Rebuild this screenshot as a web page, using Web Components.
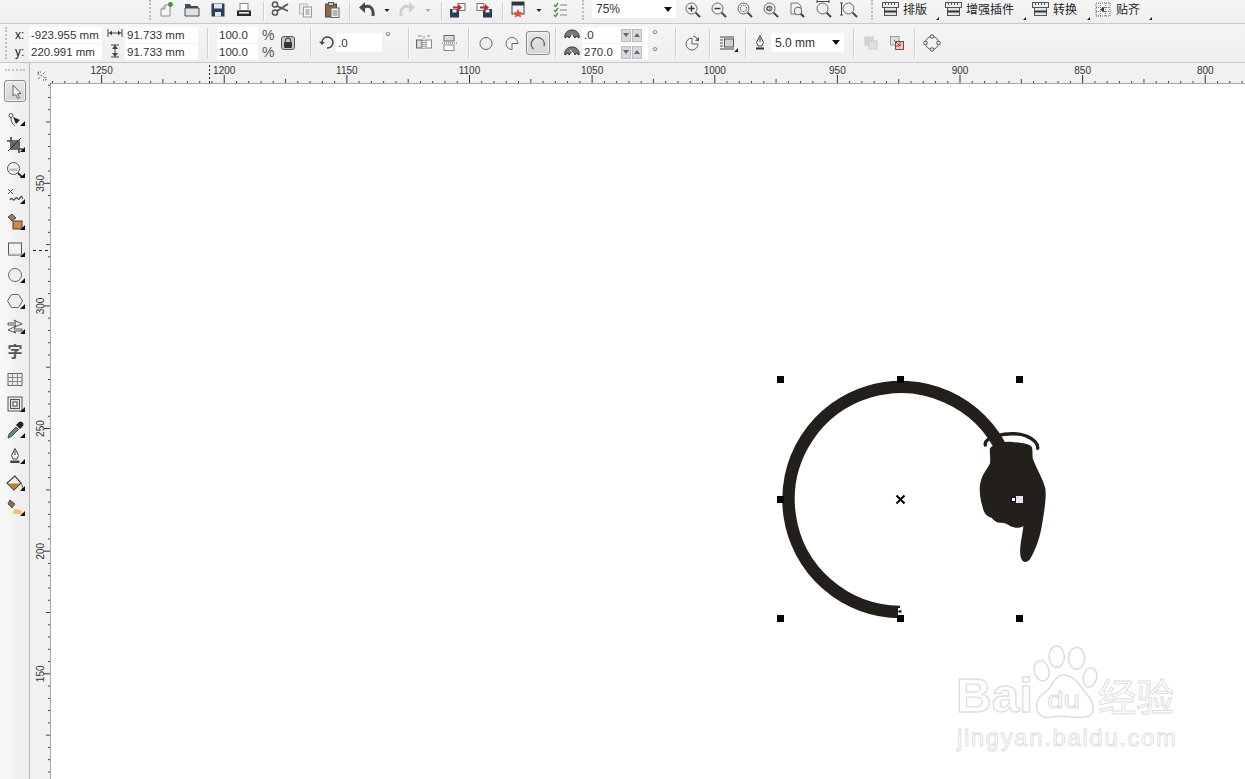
<!DOCTYPE html>
<html><head><meta charset="utf-8"><style>
html,body{margin:0;height:100%;overflow:hidden;background:#fff}
body{font:11px "Liberation Sans","Noto Sans CJK SC",sans-serif;color:#222}
x-sep[tall]{height:30px;margin-top:4px}
</style></head><body>
<x-app>
<x-bar slot="top" style="height:23px">
 <x-grip at="149"></x-grip>
 <x-icon at="156" n="new"></x-icon><x-icon at="182" n="open"></x-icon><x-icon at="208" n="save"></x-icon><x-icon at="234" n="print"></x-icon>
 <x-sep at="263"></x-sep>
 <x-icon at="270" n="cut"></x-icon><x-icon at="296" n="copy"></x-icon><x-icon at="322" n="paste"></x-icon>
 <x-sep at="349"></x-sep>
 <x-icon at="357" n="undo"></x-icon><x-icon at="377" n="drop"></x-icon><x-icon at="397" n="redo"></x-icon><x-icon at="418" n="dropl"></x-icon>
 <x-sep at="441"></x-sep>
 <x-icon at="448" n="imp"></x-icon><x-icon at="474" n="exp"></x-icon>
 <x-sep at="502"></x-sep>
 <x-icon at="508" n="launch"></x-icon><x-icon at="529" n="drop"></x-icon><x-icon at="550" n="opts"></x-icon>
 <x-grip at="582"></x-grip>
 <x-combo at="592" w="84" style="height:18px">75%</x-combo>
 <x-icon at="683" n="zin"></x-icon><x-icon at="709" n="zout"></x-icon><x-icon at="735" n="zsel"></x-icon><x-icon at="761" n="zfit"></x-icon><x-icon at="787" n="zpage"></x-icon><x-icon at="814" n="zwid"></x-icon><x-icon at="840" n="zhei"></x-icon>
 <x-grip at="871"></x-grip>
 <x-icon at="880" n="win"></x-icon><x-text at="903" w="24" style="margin-top:2px">排版</x-text><x-icon at="927" n="tri"></x-icon>
 <x-icon at="943" n="win"></x-icon><x-text at="966" w="48" style="margin-top:2px">增强插件</x-text><x-icon at="1014" n="tri"></x-icon>
 <x-icon at="1030" n="win"></x-icon><x-text at="1053" w="24" style="margin-top:2px">转换</x-text><x-icon at="1078" n="tri"></x-icon>
 <x-icon at="1093" n="snap"></x-icon><x-text at="1116" w="24" style="margin-top:2px">贴齐</x-text><x-icon at="1140" n="tri"></x-icon>
</x-bar>
<x-bar slot="prop" style="height:38px">
 <x-grip at="5" style="height:32px;margin-top:3px"></x-grip>
 <x-stack at="15" w="13"><x-text>x:</x-text><x-text>y:</x-text></x-stack>
 <x-stack at="29" w="73"><x-field>-923.955 mm</x-field><x-field>220.991 mm</x-field></x-stack>
 <x-stack at="105" w="20"><x-icon n="hsize" style="height:16px"></x-icon><x-icon n="vsize" style="height:16px"></x-icon></x-stack>
 <x-stack at="125" w="73"><x-field>91.733 mm</x-field><x-field>91.733 mm</x-field></x-stack>
 <x-sep at="207" tall></x-sep>
 <x-stack at="217" w="41"><x-field>100.0</x-field><x-field>100.0</x-field></x-stack>
 <x-stack at="262" w="12"><x-text big>%</x-text><x-text big>%</x-text></x-stack>
 <x-icon at="278" n="lock" mid></x-icon>
 <x-sep at="310" tall></x-sep>
 <x-icon at="317" n="rot" mid></x-icon>
 <x-field at="336" w="46" style="height:19px;margin-top:9px">.0</x-field>
 <x-text at="385" w="8" style="margin-top:5px;color:#777;font-size:15px">°</x-text>
 <x-sep at="408" tall></x-sep>
 <x-icon at="414" n="mirh" mid></x-icon><x-icon at="440" n="mirv" mid></x-icon>
 <x-sep at="468" tall></x-sep>
 <x-icon at="476" n="ell" mid></x-icon><x-icon at="502" n="pie" mid></x-icon>
 <x-icon at="526" w="24" n="arc" mid active></x-icon>
 <x-sep at="555" tall></x-sep>
 <x-stack at="562" w="20"><x-icon n="ang1" style="height:16px"></x-icon><x-icon n="ang2" style="height:16px"></x-icon></x-stack>
 <x-stack at="582" w="66"><x-field spin>.0</x-field><x-field spin>270.0</x-field></x-stack>
 <x-stack at="652" w="8"><x-text style="color:#777;font-size:15px">°</x-text><x-text style="color:#777;font-size:15px">°</x-text></x-stack>
 <x-sep at="675" tall></x-sep>
 <x-icon at="682" n="dir" mid></x-icon>
 <x-sep at="709" tall></x-sep>
 <x-icon at="718" n="wrap" mid></x-icon>
 <x-sep at="745" tall></x-sep>
 <x-icon at="750" n="pen" mid></x-icon>
 <x-combo at="771" w="73" style="height:19px;margin-top:9px">5.0 mm</x-combo>
 <x-sep at="853" tall></x-sep>
 <x-icon at="861" n="back" mid></x-icon><x-icon at="887" n="front" mid></x-icon>
 <x-sep at="914" tall></x-sep>
 <x-icon at="922" n="node" mid></x-icon>
</x-bar>
<x-palette slot="tools">
 <x-grip at="6" horizontal></x-grip>
 <x-icon at="18" w="22" h="22" n="pick" active style="margin-left:-1px"></x-icon>
 <x-icon at="46" n="shape" tri2></x-icon><x-icon at="72" n="crop" tri2></x-icon><x-icon at="98" n="zoom" tri2></x-icon>
 <x-icon at="124" n="free" tri2></x-icon><x-icon at="150" n="smart" tri2></x-icon><x-icon at="177" n="rect" tri2></x-icon>
 <x-icon at="203" n="oval" tri2></x-icon><x-icon at="229" n="poly" tri2></x-icon><x-icon at="254" n="basic" tri2></x-icon>
 <x-icon at="279" n="ttext"></x-icon><x-icon at="307" n="table"></x-icon><x-icon at="332" n="blend" tri2></x-icon>
 <x-icon at="358" n="dropper" tri2></x-icon><x-icon at="384" n="pen2" tri2></x-icon><x-icon at="411" n="fill" tri2></x-icon><x-icon at="436" n="ifill" tri2></x-icon>
</x-palette>
<x-hruler slot="hr"></x-hruler>
<x-vruler slot="vr"></x-vruler>
<x-canvas slot="canvas"></x-canvas>
</x-app>
<script>
const S='fill="none" stroke="#555"';
const mag=(inner='')=>`<circle cx="8.5" cy="8.5" r="5.5" fill="#eef0f2" stroke="#666"/><path d="M12.6 12.6L17 17" stroke="#444" stroke-width="2"/>${inner}`;
const win=`<rect x="2.5" y="2.5" width="16" height="5" fill="#eee" stroke="#555"/><path d="M5.500 3v2M8.500 3v2M11.500 3v2M14.500 3v2" stroke="#555"/><rect x="4.500" y="7.500" width="12" height="8" fill="#e4e4e4" stroke="#555"/><path d="M4.500 11.500h12" stroke="#333" stroke-width="2"/>`;
const I={
new:`<path d="M5 9l4-4h5v11H5z" fill="#f6f6f6" stroke="#8a8a8a"/><path d="M5 9h4V5" fill="#ddd" stroke="#8a8a8a"/><circle cx="14.5" cy="4.5" r="2.4" fill="#3c9a2c"/>`,
open:`<path d="M3 4h5l1 2h7v3H3z" fill="#3f4c58"/><path d="M3 8h14v8H3z" fill="#dfe3e6" stroke="#3f4c58"/>`,
save:`<path d="M3.5 3.5h13v13h-13z" fill="#2f3d5c"/><rect x="6" y="4" width="8" height="4.5" fill="#e4e6ee"/><rect x="7" y="12" width="6" height="4.5" fill="#e4e6ee"/>`,
print:`<rect x="6" y="3.5" width="8" height="7" fill="#fff" stroke="#888"/><rect x="3" y="10.5" width="14" height="5.5" fill="#2a2a2a"/><rect x="5" y="12" width="10" height="1.6" fill="#eee"/>`,
cut:`<circle cx="5" cy="4.5" r="2.6" ${S} stroke-width="1.5"/><circle cx="5" cy="12.5" r="2.6" ${S} stroke-width="1.5"/><path d="M7 6l11 5M7 11L18 4" stroke="#555" stroke-width="1.8"/>`,
copy:`<rect x="3.5" y="4" width="8" height="10" fill="#e8e8e8" stroke="#bbb"/><rect x="7.5" y="7" width="8" height="10" fill="#f6f6f6" stroke="#999"/><path d="M9.5 10h4M9.5 12h4M9.5 14h4" stroke="#888"/>`,
paste:`<rect x="3.5" y="4" width="11" height="13" fill="#8a6a45" stroke="#5a4630"/><rect x="6.5" y="2.5" width="5" height="3" fill="#ccc" stroke="#555"/><rect x="9" y="8" width="8" height="9.5" fill="#f8f8f8" stroke="#666"/><path d="M10.5 11h5M10.5 13h5M10.5 15h5" stroke="#777"/>`,
undo:`<path d="M7 7c5-2 10 0 9 9" fill="none" stroke="#4a4a4a" stroke-width="3"/><path d="M2 7.500L8 2v11z" fill="#4a4a4a"/>`,
redo:`<path d="M13 7c-5-2-10 0-9 9" fill="none" stroke="#d0d0d0" stroke-width="3"/><path d="M18 7.500L12 2v11z" fill="#d0d0d0"/>`,
drop:`<path d="M7.500 9h5L10 12z" fill="#222"/>`,
dropl:`<path d="M7.500 9h5L10 12z" fill="#aaa"/>`,
tri:`<path d="M8 21h4v-4z" fill="#222"/>`,
imp:`<rect x="2" y="9" width="9" height="8.500" fill="#2b3a55"/><rect x="4.500" y="9.500" width="4" height="3" fill="#eee"/><rect x="10" y="3.500" width="7" height="7" fill="#f4f4f4" stroke="#777"/><path d="M5 6.500h5V4l4 3.500-4 3.500V8.500H5z" fill="#c8232a"/>`,
exp:`<rect x="9" y="9" width="9" height="8.500" fill="#2b3a55"/><rect x="11.500" y="9.500" width="4" height="3" fill="#eee"/><rect x="3" y="3.500" width="7" height="7" fill="#f4f4f4" stroke="#777"/><path d="M6 6.500h5V4l4 3.500-4 3.500V8.500H6z" fill="#c8232a"/>`,
launch:`<rect x="4" y="2" width="12" height="12" fill="#eef" stroke="#444"/><rect x="4" y="2" width="12" height="3.500" fill="#333"/><path d="M10 11l1.500 3 3 .5-2 2 .5 3-3-1.500-3 1.500.5-3-2-2 3-.5z" fill="#e5502a" transform="translate(0 -2)"/>`,
opts:`<path d="M4 5l1.500 1.500L8 3M4 10l1.500 1.500L8 8M4 15l1.500 1.500L8 13" fill="none" stroke="#4d8a3a" stroke-width="1.400"/><path d="M10 5h7M10 10h7M10 15h7" stroke="#888"/>`,
zin:mag('<path d="M5.500 8.500h6M8.500 5.500v6" stroke="#333" stroke-width="1.400"/>'),
zout:mag('<path d="M5.500 8.500h6" stroke="#333" stroke-width="1.400"/>'),
zsel:mag('<circle cx="8.500" cy="8.500" r="3.200" fill="none" stroke="#333" stroke-dasharray="1 1"/>'),
zfit:mag('<circle cx="8.500" cy="8.500" r="2.500" fill="none" stroke="#555"/><rect x="6" y="7" width="3" height="3" fill="none" stroke="#555"/>'),
zpage:`<path d="M4 3h7l3 3v8H4z" fill="#f4f4f4" stroke="#777"/><circle cx="11" cy="11" r="3.800" fill="#eef0f2" stroke="#666"/><path d="M13.800 13.800L17 17" stroke="#444" stroke-width="2"/>`,
zwid:mag('<path d="M3 1.500h12M3 0v3M15 0v3" stroke="#444"/>'),
zhei:mag('<path d="M1.500 3v12M0 3h3M0 15h3" stroke="#444"/>'),
win:win,
snap:`<rect x="3" y="3" width="14" height="13" fill="none" stroke="#666" stroke-dasharray="1 1"/><path d="M3 7.500h14M3 11.500h14M7.500 3v13M12.500 3v13" stroke="#777" stroke-dasharray="1 1"/><path d="M11 7v5L7 9.500z" fill="#333"/>`,
hsize:`<path d="M3 4v8M17 4v8M3.500 8h13" stroke="#444"/><path d="M4 8l3-2.500v5zM16 8l-3-2.500v5z" fill="#444"/>`,
vsize:`<path d="M6 3h8M6 15h8M10 3v12" stroke="#444"/><path d="M10 3l-3 4h6zM10 15l-3-4h6z" fill="#444"/>`,
lock:`<rect x="3.500" y="3.500" width="13" height="13" rx="2.500" fill="#c9c9c9" stroke="#555"/><rect x="6" y="9" width="8" height="6" rx="1" fill="#333"/><path d="M7.500 9V7.500a2.500 2.500 0 015 0V9" ${S} stroke-width="1.300"/>`,
rot:`<path d="M5 9a5.500 5.500 0 115 6" fill="none" stroke="#444" stroke-width="1.500"/><path d="M2 8.500l6 .5-3 3z" fill="#444"/>`,
mirh:`<rect x="2.500" y="7" width="5.500" height="8" fill="#d8dce0" stroke="#666"/><rect x="12" y="7" width="5.500" height="8" fill="#fff" stroke="#888"/><path d="M10 3v14" stroke="#555" stroke-dasharray="1 1"/><path d="M4 3h4M13 3h3" stroke="#888"/>`,
mirv:`<rect x="4" y="2.500" width="10" height="5.500" fill="#d8dce0" stroke="#666"/><rect x="4" y="12" width="10" height="5.500" fill="#fff" stroke="#888"/><path d="M2 10h16" stroke="#555" stroke-dasharray="1 1"/>`,
ell:`<circle cx="10" cy="10.500" r="6" fill="#eee" stroke="#666"/>`,
pie:`<path d="M10 10.500h6a6 6 0 10-6 6z" fill="#f4f4f4" stroke="#666"/>`,
arc:`<path d="M7 16a6.500 6.500 0 1110.500-3" fill="none" stroke="#555" stroke-width="1.300" transform="translate(-1.500 0)"/>`,
ang1:`<path d="M3 13c-1-4 2-8 7-8s8 4 7 8l-3-2-1 2-3-4-3 4-1-2z" fill="#7a7a7a" stroke="#333"/><path d="M10 9v4" stroke="#fff"/>`,
ang2:`<path d="M3 13c-1-4 2-8 7-8s8 4 7 8l-3-2-1 2-3-4-3 4-1-2z" fill="#7a7a7a" stroke="#333"/><path d="M8 8l4 4" stroke="#fff"/>`,
dir:`<path d="M10 5a6 6 0 106 6h-6z" fill="#f2f2f2" stroke="#666"/><path d="M11 3a6 6 0 015 5" fill="none" stroke="#555"/><path d="M16 4v4h-4z" fill="#555" transform="translate(1 0)"/>`,
wrap:`<path d="M2 4h14M2 7h3M2 10h3M2 13h3M2 16h14" stroke="#444"/><rect x="6.500" y="6" width="9" height="8" fill="#d0d4da" stroke="#555"/><path d="M16 19h4v-4z" fill="#222"/>`,
pen:`<path d="M10 2.500l3.500 7-1.500 3.500H8L6.500 9.500z" fill="#f0f0f0" stroke="#444"/><path d="M10 5v4" stroke="#444"/><rect x="6" y="14.500" width="8" height="2" fill="#333"/>`,
back:`<rect x="4" y="4" width="8" height="8" fill="#d4d4d4" stroke="#ccc"/><rect x="8" y="8" width="8" height="8" fill="#e0e0e0" stroke="#ccc"/>`,
front:`<rect x="3.500" y="3.500" width="8.500" height="8.500" fill="#d8dce8" stroke="#99a"/><rect x="8.500" y="8.500" width="8" height="8" fill="#f4c8c8" stroke="#a33"/><path d="M7 7l6 6M13 9v4H9" fill="none" stroke="#a33"/>`,
node:`<circle cx="10" cy="10" r="6.500" fill="none" stroke="#555"/><g fill="#eee" stroke="#555"><circle cx="10" cy="3.500" r="1.800"/><circle cx="10" cy="16.500" r="1.800"/><circle cx="3.500" cy="10" r="1.800"/><circle cx="16.500" cy="10" r="1.800"/></g>`,
pick:`<path d="M8 4l8 8.500-3.500.2 2 4-1.800.8-2-4L8 15z" fill="#eef0f2" stroke="#666"/>`,
shape:`<g transform="translate(0 2)"><circle cx="6" cy="5.500" r="2" fill="#fff" stroke="#444"/><path d="M6 8c0 4 1.500 6 4 8" ${S}/><path d="M8 7l7 3-4 4z" fill="#222"/></g>`,
crop:`<g transform="translate(0 1)"><path d="M6 2v12h12M2 6h12v12" fill="none" stroke="#444" stroke-width="1.600"/><rect x="6" y="6" width="8" height="8" fill="#666"/><path d="M3 16L16 3" stroke="#333"/></g>`,
zoom:`<circle cx="8.500" cy="8.500" r="6" fill="#f2f2f2" stroke="#555"/><rect x="4.500" y="8.500" width="8" height="2.500" fill="#bbb"/><path d="M13 13l4.500 4.500" stroke="#333" stroke-width="2"/>`,
free:`<path d="M3 3l5 5M8 3L3 8" stroke="#555"/><path d="M5 14c2-5 3 3 5-1s3 3 5-1 2 1 3 0" fill="none" stroke="#444" stroke-width="1.200"/>`,
smart:`<path d="M3 5l4-3 4 4-4 3z" fill="#9c7a50" stroke="#555"/><rect x="8" y="9" width="9" height="8" fill="#c68a4a" stroke="#444"/>`,
rect:`<rect x="3.500" y="4" width="13" height="12" fill="#f2f2f2" stroke="#555"/><path d="M3.500 15h13" stroke="#ccc"/>`,
oval:`<circle cx="10" cy="10" r="6.500" fill="#eee" stroke="#666"/>`,
poly:`<path d="M6.500 3.500h7l4 6.500-4 6.500h-7l-4-6.500z" fill="#eee" stroke="#666"/>`,
basic:`<path d="M3 7h8l-2-3 8 4-8 3 2-2H3zM17 13H9l2-3-8 4 8 3-2-2h8z" fill="none" stroke="#555"/>`,
ttext:`<text x="10" y="16" text-anchor="middle" font-family="Noto Sans CJK SC" font-size="15" font-weight="700" fill="#555">字</text>`,
table:`<rect x="3" y="4.500" width="14" height="12" fill="#f0eef4" stroke="#666"/><path d="M3 8.500h14M3 12.500h14M7.500 4.500v12M12.500 4.500v12" stroke="#888"/>`,
blend:`<rect x="3" y="3" width="14" height="14" fill="#eee" stroke="#555"/><rect x="5.500" y="5.500" width="9" height="9" fill="#ddd" stroke="#555"/><rect x="8" y="8" width="4" height="4" fill="#fff" stroke="#444"/>`,
dropper:`<path d="M3 18l1-4 7-7 2.500 2.500-7 7z" fill="#5a8a70" stroke="#3a5a4a"/><path d="M11 5l4 4 2.500-2.500a2 2 0 00-4-4z" fill="#222"/>`,
pen2:`<path d="M10 2.500l3.500 7-1.500 3.500H8L6.500 9.500z" fill="#f4f4f4" stroke="#444"/><path d="M10 5v4" stroke="#444"/><rect x="5.500" y="14.500" width="9" height="2.500" fill="#444"/>`,
fill:`<path d="M10 3L2 10l7 7 7-7z" fill="#f4f4f4" stroke="#444" stroke-width="1.200"/><path d="M4 10.500h11L9 16.500z" fill="#c87a1e"/><path d="M16 10c1 2 2 4 1.500 6" ${S}/>`,
ifill:`<path d="M5 2l5 4-3 4-4-4z" fill="#8a6a50" stroke="#555"/><path d="M9 11l7 1 2 4H8z" fill="#eec268"/>`
};
const cls=(name,css,html,fn)=>customElements.define(name,class extends HTMLElement{
 constructor(){super();this.attachShadow({mode:'open'}).innerHTML=`<style>${css}</style>${html(this)}`;}
 connectedCallback(){fn&&fn(this);}
});
// Flow helper: turns each child's "at" into a margin from the previous child's end
function place(p,prop,size,def){let e=0;[...p.children].forEach(c=>{const at=c.getAttribute('at');if(at===null)return;
 const s=+(c.getAttribute(size==='width'?'w':'h')||parseFloat(c.style[size])||def(c));c.style[prop]=(+at-e)+'px';c.style[size]=s+'px';e=+at+s;});}
const defW=c=>({'X-SEP':1,'X-GRIP':3}[c.tagName]||20);
cls('x-app',`:host{display:grid;grid-template-columns:30px 21px 1fr;grid-template-rows:24px 39px 21px 1fr;width:1245px;height:779px;overflow:hidden}
 ::slotted([slot=top]){grid-column:1/4;grid-row:1}::slotted([slot=prop]){grid-column:1/4;grid-row:2}
 ::slotted([slot=tools]){grid-column:1;grid-row:3/5}::slotted([slot=hr]){grid-column:2/4;grid-row:3}
 ::slotted([slot=vr]){grid-column:2;grid-row:4}::slotted([slot=canvas]){grid-column:3;grid-row:4}`,
 ()=>`<slot name="top"></slot><slot name="prop"></slot><slot name="tools"></slot><slot name="hr"></slot><slot name="vr"></slot><slot name="canvas"></slot>`);
cls('x-bar',`:host{display:flex;align-items:flex-start;background:linear-gradient(#f5f5f5,#eeeeee);border-bottom:1px solid #c8c8c8;overflow:hidden}`,
 ()=>`<slot></slot>`,t=>place(t,'marginLeft','width',defW));
cls('x-palette',`:host{display:flex;flex-direction:column;align-items:flex-start;background:linear-gradient(90deg,#f8f8f8,#ececec);border-right:1px solid #b4b4b4;box-sizing:border-box;width:30px;padding-left:5px}`,
 ()=>`<slot></slot>`,t=>{place(t,'marginTop','height',c=>c.tagName==='X-GRIP'?3:20);});
cls('x-stack',`:host{display:flex;flex-direction:column;gap:1px;margin-top:3px}`,()=>`<slot></slot>`);
cls('x-sep',`:host{display:block;width:1px;height:19px;margin-top:2px;background:#cfcfcf;box-shadow:1px 0 #fafafa}`,()=>``);
cls('x-grip',`:host{display:block;width:2px;height:20px;border-left:2px dotted #bdbdbd;box-sizing:border-box}
 :host([horizontal]){width:20px!important;height:2px!important;border-left:0;border-top:2px dotted #c4c4c4}`,()=>``);
cls('x-text',`:host{display:block;height:16px;line-height:16px;font-size:12px;color:#222;white-space:nowrap}
 :host([big]){font-size:14px;color:#555}`,()=>`<slot></slot>`);
cls('x-field',`:host{display:flex;align-items:center;height:16px;background:#fff;padding-left:2px;font-size:11.500px;color:#333;box-sizing:border-box;white-space:nowrap;position:relative}
 .s{display:none;margin-left:auto;gap:1px;padding-right:6px}:host([spin]) .s{display:flex}
 i{width:10px;height:13px;background:#d6dade;border:1px solid #bbb;box-sizing:border-box;position:relative}
 i:after{content:"";position:absolute;left:1px;top:3px;border:3px solid transparent;border-top:4px solid #666;border-bottom:0}
 i+i:after{border-top:0;border-bottom:4px solid #666}`,
 ()=>`<slot></slot><span class="s"><i></i><i></i></span>`);
cls('x-combo',`:host{display:flex;align-items:center;background:#fff;padding:0 4px;box-sizing:border-box;font-size:12px;color:#333;border-radius:2px}
 b{margin-left:auto;border:4px solid transparent;border-top:5px solid #111;border-bottom:0}`,()=>`<slot></slot><b></b>`);
cls('x-icon',`:host{display:flex;align-items:center;justify-content:center;height:20px;position:relative;box-sizing:border-box}
 :host([mid]){margin-top:9px}:host([n=arc]){height:24px;margin-top:7px}
 :host([active]){background:linear-gradient(#e8e8e8,#d4d4d4);border:1px solid #8c8c8c;border-radius:3px;box-shadow:inset 0 0 0 1px #f2f2f2}
 svg{width:20px;height:20px;display:block;flex:none}
 u{display:none;position:absolute;right:0;bottom:2px;border:0 solid transparent;border-width:0 0 5px 5px;border-bottom-color:#111}
 :host([tri2]) u{display:block}`,
 t=>`<svg viewBox="0 0 20 20">${I[t.getAttribute('n')]||''}</svg><u></u>`);

const rulerTicks=(n0,f,cb)=>{for(let v=1300;v>=100;v-=5){const p=f(v);cb(v,p);}};
const fx=v=>101.6+(1250-v)*2.4526, fy=v=>183.3+(350-v)*2.4526;
cls('x-hruler',`:host{display:block;height:21px;background:#f1f1f1;overflow:hidden}svg{display:block}text{font:10px "Liberation Sans",sans-serif;fill:#333}`,()=>{
 let s='';rulerTicks(0,fx,(v,p)=>{if(p<52||p>1245)return;
  if(v%50==0)s+=`<path d="M${p} 75v8" stroke="#333"/><text x="${p}" y="74" text-anchor="middle">${v}</text>`;
  else s+=`<path d="M${p} ${v%25==0?79:81}V83" stroke="#444"/>`;});
 return `<svg viewBox="30 63 1215 21" width="1215" height="21"><path d="M50 83.500H1245" stroke="#a8a8a8"/>${s}
 <path d="M209.500 65v18" stroke="#222" stroke-dasharray="2 2"/>
 <path d="M38 73l8 6M38 79l3-3M43 74l3-3M38 72h3M38 72v3M46 80h-3M46 80v-3" stroke="#555" stroke-dasharray="1 1" fill="none"/><path d="M50.500 83v1" stroke="#444"/></svg>`;});
cls('x-vruler',`:host{display:block;width:21px;background:#f1f1f1;overflow:hidden}svg{display:block}text{font:10px "Liberation Sans",sans-serif;fill:#333}`,()=>{
 let s='';rulerTicks(0,fy,(v,p)=>{if(p<84||p>779)return;
  if(v%50==0)s+=`<path d="M44 ${p}h6" stroke="#333"/><text transform="translate(44 ${p}) rotate(-90)" text-anchor="middle">${v}</text>`;
  else s+=`<path d="M${v%25==0?46:48} ${p}H50" stroke="#444"/>`;});
 return `<svg viewBox="30 84 21 695" width="21" height="695"><path d="M50.500 84V779" stroke="#a8a8a8"/>${s}<path d="M33 250.500h17" stroke="#222" stroke-dasharray="3 3"/></svg>`;});
const H=[[780.5,379.5],[900.5,379.5],[1019.5,379.5],[780.5,499.5],[780.5,618.5],[900.5,618.5],[1019.5,618.5]];
cls('x-canvas',`:host{display:block;background:#fff;overflow:hidden;position:relative}svg{position:absolute;inset:0}`,()=>`
<svg viewBox="51 84 1194 695" width="1194" height="695">
 <g transform="translate(940 640) scale(.3333)" fill="#fff" stroke="#dcdcdc" stroke-width="4.500">
  <ellipse cx="305" cy="92" rx="22" ry="31" transform="rotate(-15 305 92)"/><ellipse cx="350" cy="50" rx="23" ry="32"/><ellipse cx="410" cy="55" rx="24" ry="33"/><ellipse cx="450" cy="112" rx="20" ry="29" transform="rotate(15 450 112)"/>
  <path d="M370 105c30 0 45 25 60 45 15 18 32 35 30 60-3 25-35 25-70 20-25-3-40-2-60 2-25 3-40-10-40-35 0-30 25-35 40-55 10-15 20-37 40-37z"/>
 </g>
 <g font-family="Liberation Sans,sans-serif" fill="#fff" stroke="#dedede" stroke-width="1.400">
  <text x="956" y="712" font-size="49" font-weight="700" textLength="77" lengthAdjust="spacingAndGlyphs">Bai</text>
  <text x="1047" y="708" font-size="24" font-weight="400" stroke-width=".9" textLength="33" lengthAdjust="spacingAndGlyphs">du</text>
  <text x="1098" y="711" font-size="38" font-family="Noto Sans CJK SC,sans-serif" stroke-width="1">经验</text>
  <text x="957" y="746" font-size="24" stroke-width=".9" textLength="219" lengthAdjust="spacing">jingyan.baidu.com</text>
 </g>
 <path d="M900 612A112.500 112.500 0 1 1 1003 452" fill="none" stroke="#231f1a" stroke-width="12.500"/>
 <g transform="translate(960 420) scale(.3333)" fill="#231f1a">
  <path d="M90 85C100 70 130 65 150 65C180 68 205 70 215 80C220 92 215 105 220 120C232 150 250 180 256 205C260 235 252 280 245 320C238 360 222 400 208 420C198 430 186 428 182 410C176 385 188 345 190 318C180 325 165 325 150 318C142 312 135 308 125 308C112 310 102 302 95 293C80 292 70 275 68 262C60 235 56 205 62 185C66 165 80 150 90 130C92 110 88 95 90 85Z"/>
  <path d="M76 75c-3-12 14-22 35-28 30-8 70-8 90 2 20 8 34 22 32 36" fill="none" stroke="#231f1a" stroke-width="10" stroke-linecap="round"/>
 </g>
 <path d="M893 495.500l8 8M901 495.500l-8 8" transform="translate(3.500 0)" stroke="#000" stroke-width="2"/>
 ${H.map(([x,y])=>`<rect x="${x-3.5}" y="${y-3.5}" width="7" height="7" fill="#000"/>`).join('')}
 <rect x="1016" y="496" width="7" height="7" fill="#e4e4ee"/>
 <rect x="1011.500" y="497.500" width="4" height="4" fill="#fff" stroke="#000"/>
 <rect x="898" y="608" width="4" height="7" fill="#eee"/><rect x="898.500" y="610.500" width="3" height="2" fill="#000"/>
</svg>`);
</script>
</body></html>
